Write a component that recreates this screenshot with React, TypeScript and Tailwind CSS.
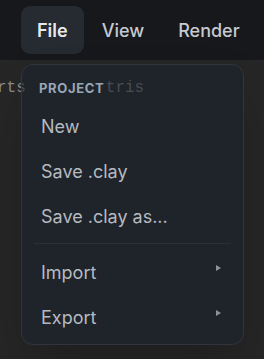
import React from 'react';

const topItems = ['File', 'View', 'Render'];

function SubArrow() {
  return (
    <svg width="5" height="6" viewBox="0 0 5 6" className="mb-[10px]">
      <polygon points="0,0 5,3 0,6" fill="#8e9297" />
    </svg>
  );
}

function MenuItem({ label, sub }: { label: string; sub?: boolean }) {
  return (
    <div className="h-[45px] flex items-center justify-between pl-[19px] pr-[22px] text-[18px] text-[#b6bac0]">
      <span>{label}</span>
      {sub && <SubArrow />}
    </div>
  );
}

export default function App() {
  return (
    <div
      className="relative w-full h-[359px] overflow-hidden bg-[#262626]"
      style={{ fontFamily: 'Inter, "Noto Sans", sans-serif' }}
    >
      {/* menu bar */}
      <div className="h-[61px] flex items-center gap-[2px] pl-[21px] bg-[#16181c] border-b border-[#26282c]">
        {topItems.map((item, i) => (
          <div
            key={item}
            className={
              i === 0
                ? 'h-[48px] flex items-center px-[16px] rounded-[9px] bg-[#262a31] text-[18px] font-semibold text-[#e7e9ec]'
                : 'h-[48px] flex items-center px-[16px] rounded-[9px] text-[18px] font-medium text-[#c6cad0]'
            }
          >
            {item}
          </div>
        ))}
      </div>

      {/* editor text behind */}
      <div
        className="mt-[15px] flex text-[16px] leading-[24px] text-[#8a8a8a] whitespace-pre"
        style={{ fontFamily: '"Liberation Mono", monospace' }}
      >
        <span className="ml-[-3px]">rts</span>
        <span className="ml-[80px]">tris</span>
      </div>

      {/* dropdown */}
      <div className="absolute left-[21px] top-[64px] w-[223px] rounded-[12px] border border-[#30343b] bg-[#1b212d]/[0.6] shadow-2xl pt-[11px] pb-[4px]">
        <div className="h-[24px] leading-[24px] mb-[4px] pl-[17px] text-[13px] font-bold tracking-[0.05em] text-[#9aa6b6]">
          PROJECT
        </div>
        <MenuItem label="New" />
        <MenuItem label="Save .clay" />
        <MenuItem label="Save .clay as..." />
        <div className="mt-[4px] mb-[6px] mx-[12px] h-px bg-[#2b2f36]" />
        <MenuItem label="Import" sub />
        <MenuItem label="Export" sub />
      </div>
    </div>
  );
}
